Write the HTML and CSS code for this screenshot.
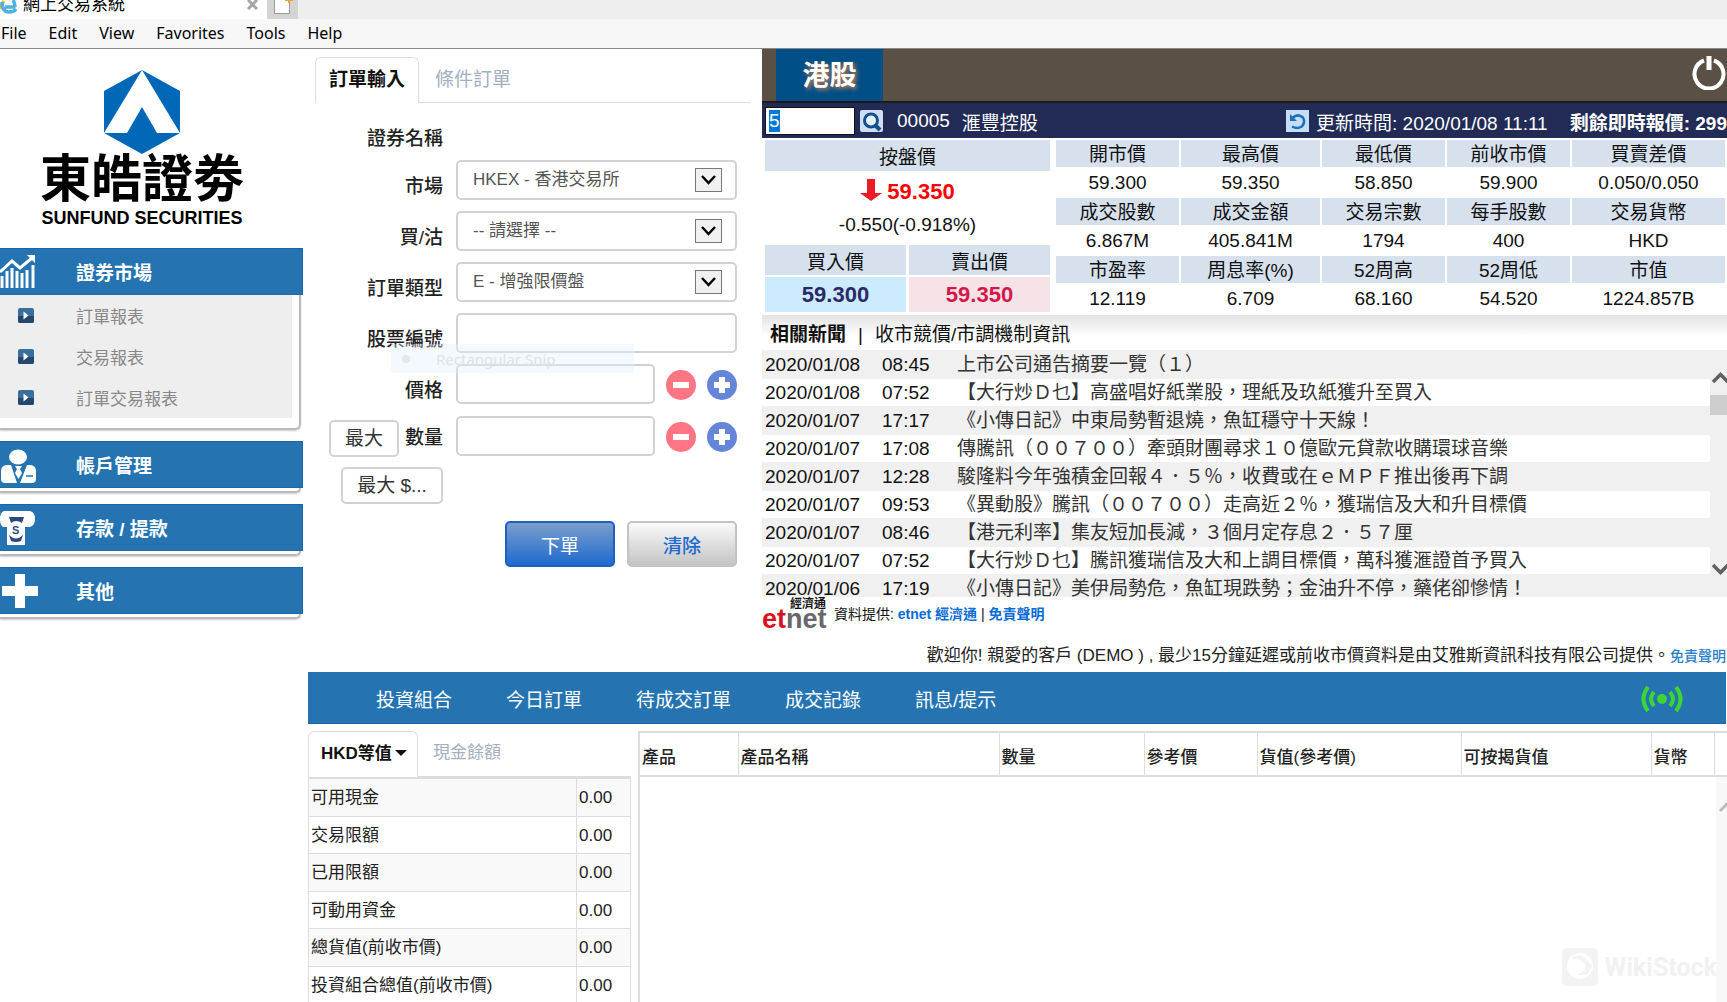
FILE: index.html
```html
<!DOCTYPE html>
<html lang="zh-Hant">
<head>
    <meta charset="utf-8">
    <title>網上交易系統</title>
    <link rel="stylesheet" href="styles.css">
</head>
<body>
    <header class="browser">
        <div class="tab-strip">
            <div class="browser-tab">
                <svg class="ie-icon" width="18" height="20" viewBox="0 0 18 20">
                    <path d="M0 9 Q1 4 4 1" fill="none" stroke="#f5b625" stroke-width="3"/>
                    <path d="M15.500 7 H5 M2 2 Q2 12 9 12 Q14 12 16 9 M13 0 Q15 3 15 7" fill="none" stroke="#4fb0e3" stroke-width="3.500"/>
                </svg>
                <span class="browser-title">網上交易系統</span>
                <button class="tab-close" aria-label="Close tab">
                    <svg width="11" height="10" viewBox="0 0 11 10"><path d="M1 0 L10 9 M10 0 L1 9" stroke="#a5a5a5" stroke-width="3"/></svg>
                </button>
            </div>
            <button class="new-tab" aria-label="New tab">
                <svg width="31" height="19" viewBox="0 0 31 19">
                    <path d="M7.500 0 V13.500 H22.500 V0" fill="#fdfdfd" stroke="#9a9a9a"/>
                    <path d="M22 0 V3 M18 0 H26" stroke="#f0a030" stroke-width="2"/>
                </svg>
            </button>
        </div>
        <nav class="menu-bar">
            <a href="#">File</a><a href="#">Edit</a><a href="#">View</a><a href="#">Favorites</a><a href="#">Tools</a><a href="#">Help</a>
        </nav>
    </header>

    <div class="app">
        <aside class="sidebar">
            <div class="logo">
                <svg width="78" height="84" viewBox="0 0 78 84">
                    <path d="M39 0 L77 21 V63 L39 84 L1 63 V21 Z" fill="#0068b7"/>
                    <path d="M39 0 L77 63 H54 L39 37 L24 63 H1 Z" fill="#fff"/>
                </svg>
                <div class="logo-name">東皓證劵</div>
                <div class="logo-sub">SUNFUND SECURITIES</div>
            </div>
            <div class="menu-group">
                <a href="#" class="menu-head">
                    <svg width="38" height="36" viewBox="0 0 38 36">
                        <path d="M2 34 V22 M7 34 V17 M12 34 V14 M17 34 V17 M22 34 V19 M27 34 V16 M33 34 V11" stroke="#fff" stroke-width="3"/>
                        <path d="M0 18 L12 7 L20 14 L32 4" fill="none" stroke="#fff" stroke-width="3"/>
                        <path d="M27 1 H35 V9 Z" fill="#fff"/>
                    </svg>
                    <span>證券市場</span>
                </a>
                <div class="menu-body open">
                    <ul>
                        <li><svg width="16" height="15" viewBox="0 0 16 15"><rect width="16" height="15" rx="2" fill="#3a6f9c"/><path d="M0 8 H16 V13 Q16 15 14 15 H2 Q0 15 0 13 Z" fill="#23486f"/><path d="M5.500 3.500 L10.500 7.500 L5.500 11.500 Z" fill="#fff"/></svg><a href="#">訂單報表</a></li>
                        <li><svg width="16" height="15" viewBox="0 0 16 15"><rect width="16" height="15" rx="2" fill="#3a6f9c"/><path d="M0 8 H16 V13 Q16 15 14 15 H2 Q0 15 0 13 Z" fill="#23486f"/><path d="M5.500 3.500 L10.500 7.500 L5.500 11.500 Z" fill="#fff"/></svg><a href="#">交易報表</a></li>
                        <li><svg width="16" height="15" viewBox="0 0 16 15"><rect width="16" height="15" rx="2" fill="#3a6f9c"/><path d="M0 8 H16 V13 Q16 15 14 15 H2 Q0 15 0 13 Z" fill="#23486f"/><path d="M5.500 3.500 L10.500 7.500 L5.500 11.500 Z" fill="#fff"/></svg><a href="#">訂單交易報表</a></li>
                    </ul>
                </div>
            </div>
            <div class="menu-group">
                <a href="#" class="menu-head">
                    <svg width="38" height="36" viewBox="0 0 38 36">
                        <ellipse cx="18" cy="10" rx="9" ry="7.500" fill="#fff"/>
                        <path d="M1 24 Q1 19 6 18 H11 L17 36 H5 Q1 36 1 32 Z M36 24 Q36 19 31 18 H27 L20 36 H32 Q36 36 36 32 Z" fill="#fff"/>
                        <path d="M15 19 H22 L20 22 L22 26 L18.500 32 L15 26 L17 22 Z" fill="#fff"/>
                        <path d="M26 29 H33" stroke="#2574b1" stroke-width="1.500"/>
                    </svg>
                    <span>帳戶管理</span>
                </a>
                <div class="menu-body"></div>
            </div>
            <div class="menu-group">
                <a href="#" class="menu-head">
                    <svg width="38" height="36" viewBox="0 0 38 36">
                        <path d="M4 1 H30 Q35 2 35 9 Q35 16 29 17 H25 V35 H7 V17 H3 Q0 15 0 9 Q0 2 4 1 Z" fill="#fff"/>
                        <path d="M9 7 H24 L22 13 Q16 9 11 13 Z M9 25 Q16 32 23 25 L21 31 Q16 33 11 31 Z" fill="#2b4a80"/>
                        <text x="12" y="24" class="coin">S</text>
                    </svg>
                    <span>存款 / 提款</span>
                </a>
                <div class="menu-body"></div>
            </div>
            <div class="menu-group">
                <a href="#" class="menu-head">
                    <svg width="38" height="36" viewBox="0 0 38 36"><path d="M15 1 H25 V13 H38 V23 H25 V35 H15 V23 H2 V13 H15 Z" fill="#fff"/></svg>
                    <span>其他</span>
                </a>
                <div class="menu-body"></div>
            </div>
        </aside>

        <main class="main">
            <div class="top-row">
                <section class="order">
                    <div class="tabs order-tabs">
                        <a href="#" class="tab active">訂單輸入</a>
                        <a href="#" class="tab">條件訂單</a>
                    </div>
                    <form class="order-form">
                        <div class="row name-row"><label>證券名稱</label></div>
                        <div class="row">
                            <label for="market">市場</label>
                            <span class="select-box">
                                <select id="market"><option>HKEX - 香港交易所</option></select>
                                <svg class="arrow" width="27" height="24" viewBox="0 0 27 24"><rect x=".5" y=".5" width="26" height="23" fill="#f0f0f0" stroke="#777"/><path d="M7 8 L13.500 15 L20 8" fill="none" stroke="#000" stroke-width="2.500"/></svg>
                            </span>
                        </div>
                        <div class="row">
                            <label for="side">買/沽</label>
                            <span class="select-box">
                                <select id="side"><option>-- 請選擇 --</option></select>
                                <svg class="arrow" width="27" height="24" viewBox="0 0 27 24"><rect x=".5" y=".5" width="26" height="23" fill="#f0f0f0" stroke="#777"/><path d="M7 8 L13.500 15 L20 8" fill="none" stroke="#000" stroke-width="2.500"/></svg>
                            </span>
                        </div>
                        <div class="row">
                            <label for="type">訂單類型</label>
                            <span class="select-box">
                                <select id="type"><option>E - 增強限價盤</option></select>
                                <svg class="arrow" width="27" height="24" viewBox="0 0 27 24"><rect x=".5" y=".5" width="26" height="23" fill="#f0f0f0" stroke="#777"/><path d="M7 8 L13.500 15 L20 8" fill="none" stroke="#000" stroke-width="2.500"/></svg>
                            </span>
                        </div>
                        <div class="row">
                            <label for="code">股票編號</label>
                            <input type="text" id="code">
                        </div>
                        <div class="row">
                            <label for="price">價格</label>
                            <input type="text" id="price">
                            <button type="button" class="step minus" aria-label="減少價格"></button>
                            <button type="button" class="step plus" aria-label="增加價格"></button>
                        </div>
                        <div class="row qty-row">
                            <button type="button" class="max">最大</button>
                            <label for="qty">數量</label>
                            <input type="text" id="qty">
                            <button type="button" class="step minus" aria-label="減少數量"></button>
                            <button type="button" class="step plus" aria-label="增加數量"></button>
                        </div>
                        <div class="max-row"><button type="button" class="max max-cash">最大 $...</button></div>
                        <div class="actions">
                            <button type="button" class="btn submit">下單</button>
                            <button type="button" class="btn clear">清除</button>
                        </div>
                        <div class="snip"><i></i><span>Rectangular Snip</span></div>
                    </form>
                </section>

                <section class="quote">
                    <div class="quote-top">
                        <a href="#" class="hk-tab">港股</a>
                        <button class="power" aria-label="登出">
                            <svg width="34" height="34" viewBox="0 0 34 34"><path d="M12 4.500 A14.500 14.500 0 1 0 22 4.500" fill="none" stroke="#fff" stroke-width="4"/><path d="M17 0 V14" stroke="#fff" stroke-width="5"/></svg>
                        </button>
                    </div>
                    <div class="search-bar">
                        <input type="text" id="quote-code" value="5" aria-label="股票編號">
                        <button class="icon-btn" aria-label="搜尋">
                            <svg width="23" height="22" viewBox="0 0 23 22"><rect width="23" height="22" rx="2" fill="#cfdff0"/><circle cx="11" cy="10.500" r="6.500" fill="#e8f0f8" stroke="#14508f" stroke-width="3"/><path d="M15 15 L20 20" stroke="#14508f" stroke-width="4"/></svg>
                        </button>
                        <span class="stock-code">00005</span>
                        <span>滙豐控股</span>
                        <button class="icon-btn refresh" aria-label="更新">
                            <svg width="23" height="22" viewBox="0 0 23 22"><rect width="23" height="22" fill="#c5def5"/><path d="M6.500 8 Q12 3 17 7.500 Q20 13 15 17 Q11 19 6 16.500" fill="none" stroke="#1f6fb8" stroke-width="2.500"/><path d="M4 4 V11 H11 Z" fill="#1f6fb8"/></svg>
                        </button>
                        <span>更新時間: 2020/01/08 11:11</span>
                        <b class="remain">剩餘即時報價: 299</b>
                    </div>
                    <div class="quote-data">
                        <table class="price-table">
                            <tr class="r-head"><th colspan="2">按盤價</th></tr>
                            <tr class="r-last"><td colspan="2">
                                <div class="last"><svg width="22" height="22" viewBox="0 0 22 22"><path d="M7 0 H15 V14 H22 L11 22 L0 14 H7 Z" fill="#ec1c24"/></svg>59.350</div>
                                <div class="change">-0.550(-0.918%)</div>
                            </td></tr>
                            <tr class="r-sub"><th>買入價</th><th>賣出價</th></tr>
                            <tr class="r-val"><td class="bid">59.300</td><td class="ask">59.350</td></tr>
                        </table>
                        <table class="stats">
                            <colgroup><col class="c1"><col class="c2"><col class="c1"><col class="c1"><col></colgroup>
                            <tr><th>開市價</th><th>最高價</th><th>最低價</th><th>前收市價</th><th>買賣差價</th></tr>
                            <tr><td>59.300</td><td>59.350</td><td>58.850</td><td>59.900</td><td>0.050/0.050</td></tr>
                            <tr><th>成交股數</th><th>成交金額</th><th>交易宗數</th><th>每手股數</th><th>交易貨幣</th></tr>
                            <tr><td>6.867M</td><td>405.841M</td><td>1794</td><td>400</td><td>HKD</td></tr>
                            <tr><th>市盈率</th><th>周息率(%)</th><th>52周高</th><th>52周低</th><th>市值</th></tr>
                            <tr><td>12.119</td><td>6.709</td><td>68.160</td><td>54.520</td><td>1224.857B</td></tr>
                        </table>
                    </div>
                    <div class="news-head"><b>相關新聞</b><span>|</span><a href="#">收市競價/市調機制資訊</a></div>
                    <div class="news">
                        <table>
                            <tr><td class="date">2020/01/08</td><td class="time">08:45</td><td>上市公司通告摘要一覽（１）</td></tr>
                            <tr><td class="date">2020/01/08</td><td class="time">07:52</td><td>【大行炒Ｄ乜】高盛唱好紙業股，理紙及玖紙獲升至買入</td></tr>
                            <tr><td class="date">2020/01/07</td><td class="time">17:17</td><td>《小傳日記》中東局勢暫退燒，魚缸穩守十天線！</td></tr>
                            <tr><td class="date">2020/01/07</td><td class="time">17:08</td><td>傳騰訊（００７００）牽頭財團尋求１０億歐元貸款收購環球音樂</td></tr>
                            <tr><td class="date">2020/01/07</td><td class="time">12:28</td><td>駿隆料今年強積金回報４．５％，收費或在ｅＭＰＦ推出後再下調</td></tr>
                            <tr><td class="date">2020/01/07</td><td class="time">09:53</td><td>《異動股》騰訊（００７００）走高近２％，獲瑞信及大和升目標價</td></tr>
                            <tr><td class="date">2020/01/07</td><td class="time">08:46</td><td>【港元利率】集友短加長減，３個月定存息２．５７厘</td></tr>
                            <tr><td class="date">2020/01/07</td><td class="time">07:52</td><td>【大行炒Ｄ乜】騰訊獲瑞信及大和上調目標價，萬科獲滙證首予買入</td></tr>
                            <tr><td class="date">2020/01/06</td><td class="time">17:19</td><td>《小傳日記》美伊局勢危，魚缸現跌勢；金油升不停，藥佬卻慘情！</td></tr>
                        </table>
                        <div class="scrollbar">
                            <svg width="17" height="12" viewBox="0 0 17 12"><path d="M3 10 L10.500 2.500 L18 10" fill="none" stroke="#606060" stroke-width="3.500"/></svg>
                            <div class="thumb"></div>
                            <svg class="down" width="17" height="12" viewBox="0 0 17 12"><path d="M3 2 L10.500 9.500 L18 2" fill="none" stroke="#606060" stroke-width="3.500"/></svg>
                        </div>
                    </div>
                    <div class="provider">
                        <div class="etnet"><small>經濟通</small><b>et<span>net</span></b></div>
                        <p>資料提供: <a href="#">etnet 經濟通</a> | <a href="#">免責聲明</a></p>
                    </div>
                </section>
            </div>

            <p class="welcome">歡迎你! 親愛的客戶 (DEMO ) , 最少15分鐘延遲或前收市價資料是由艾雅斯資訊科技有限公司提供。<a href="#">免責聲明</a></p>

            <nav class="bottom-nav">
                <a href="#">投資組合</a>
                <a href="#">今日訂單</a>
                <a href="#">待成交訂單</a>
                <a href="#">成交記錄</a>
                <a href="#">訊息/提示</a>
                <svg width="42" height="28" viewBox="0 0 42 28" fill="none" stroke="#3bd632">
                    <circle cx="21" cy="14" r="5" fill="#3bd632" stroke="none"/>
                    <path d="M13 7 Q7 14 13 21 M29 7 Q35 14 29 21" stroke-width="4"/>
                    <path d="M7 2 Q-2 14 7 26 M35 2 Q44 14 35 26" stroke-width="4"/>
                </svg>
            </nav>

            <div class="bottom-row">
                <section class="cash">
                    <div class="tabs cash-tabs">
                        <a href="#" class="tab active">HKD等值<i class="caret"></i></a>
                        <a href="#" class="tab">現金餘額</a>
                    </div>
                    <table>
                        <tr><td>可用現金</td><td class="amount">0.00</td></tr>
                        <tr><td>交易限額</td><td class="amount">0.00</td></tr>
                        <tr><td>已用限額</td><td class="amount">0.00</td></tr>
                        <tr><td>可動用資金</td><td class="amount">0.00</td></tr>
                        <tr><td>總貨值(前收市價)</td><td class="amount">0.00</td></tr>
                        <tr><td>投資組合總值(前收市價)</td><td class="amount">0.00</td></tr>
                    </table>
                </section>
                <section class="portfolio">
                    <table>
                        <colgroup><col class="p1"><col><col class="p3"><col class="p4"><col class="p5"><col class="p6"><col class="p7"><col class="p8"></colgroup>
                        <tr><th>產品</th><th>產品名稱</th><th>數量</th><th>參考價</th><th>貨值(參考價)</th><th>可按揭貨值</th><th>貨幣</th><th></th></tr>
                    </table>
                    <div class="scroll-track">
                        <svg width="11" height="14" viewBox="0 0 11 14"><path d="M4 12 L12 4" stroke="#bbb" stroke-width="3"/></svg>
                    </div>
                </section>
            </div>
        </main>
    </div>

    <div class="watermark">
        <svg width="36" height="38" viewBox="0 0 36 38">
            <rect width="36" height="38" rx="5" fill="#f3f3f3"/>
            <circle cx="18" cy="18" r="13" fill="#fff"/>
            <path d="M9 10 Q18 4 25 12 L30 18 L25 27 H15 L23 22 L24 17 L19 12 Z" fill="#f3f3f3"/>
        </svg>
        <span>WikiStock</span>
    </div>

    <script>
        // the stock code is ready to be typed over
        document.getElementById("quote-code").select();
    </script>
</body>
</html>
```
FILE: styles.css
```css
* {
    box-sizing: border-box;
}
body {
    margin: 0;
    min-height: 100vh;
    display: flex;
    flex-direction: column;
    font-family: "Liberation Sans", "Noto Sans CJK TC", sans-serif;
    font-size: 19px;
    color: #222;
    background-color: #fff;
    overflow-x: hidden;
}
a {
    color: inherit;
    text-decoration: none;
}
button, input, select {
    font-family: inherit;
    margin: 0;
}
button {
    cursor: pointer;
    padding: 0;
}
svg {
    display: block;
    flex: none;
}
table {
    border-collapse: collapse;
}
th {
    font-weight: normal;
}

/* browser */
.tab-strip {
    display: flex;
    height: 19px;
    overflow: hidden;
    background-color: #eee;
}
.browser-tab {
    display: flex;
    width: 267px;
    background-color: #fff;
}
.browser-title {
    margin-left: 5px;
    font-size: 17px;
    line-height: 24px;
    margin-top: -7px;
    color: #000;
    flex: 1;
}
.tab-close {
    border: none;
    background: none;
    height: 10px;
    margin-right: 9px;
}
.new-tab {
    border: none;
    background-color: #d4d4d4;
}
.menu-bar {
    display: flex;
    gap: 22px;
    height: 30px;
    padding-left: 1px;
    background-color: #f7f7f7;
    border-bottom: 1px solid #888;
    font-family: "Noto Sans", sans-serif;
    font-size: 16px;
    line-height: 29px;
    color: #000;
}

.app {
    display: flex;
    flex: 1;
}

/* sidebar */
.sidebar {
    width: 303px;
    flex: none;
}
.logo {
    display: flex;
    flex-direction: column;
    align-items: center;
    width: 284px;
    height: 199px;
    padding-top: 21px;
    color: #000;
}
.logo-name {
    font-size: 51px;
    font-weight: bold;
    line-height: 52px;
}
.logo-sub {
    font-size: 18px;
    font-weight: bold;
    line-height: 24px;
    white-space: nowrap;
}
.menu-group {
    margin-bottom: 11px;
}
.menu-head {
    display: flex;
    align-items: center;
    height: 47px;
    border: 1px solid #1767a8;
    border-left: none;
    background-color: #2574b1;
    color: #fff;
    font-weight: bold;
}
.menu-head svg {
    margin-right: 38px;
}
.coin {
    font-size: 11px;
    font-weight: bold;
    fill: #2b4a80;
}
.menu-body {
    height: 5px;
    width: 301px;
    border-right: 2px solid #bbb;
    border-bottom: 2px solid #bbb;
    border-radius: 0 0 6px 0;
    box-shadow: 0 1px 2px #ccc;
}
.menu-body.open {
    height: 135px;
    padding-right: 7px;
}
.menu-body ul {
    list-style: none;
    margin: 0;
    padding: 0;
    background-color: #eee;
}
.menu-body li {
    display: flex;
    align-items: center;
    height: 41px;
    padding-left: 18px;
    gap: 42px;
    font-size: 17px;
    color: #888;
}

.main {
    flex: 1;
    min-width: 0;
    display: flex;
    flex-direction: column;
}
.top-row {
    display: flex;
}

/* tabs */
.tabs {
    display: flex;
    border-bottom: 1px solid #ddd;
}
.tab {
    color: #a3aec2;
}
.tab.active {
    border: 1px solid #ddd;
    border-bottom: none;
    border-radius: 6px 6px 0 0;
    margin-bottom: -1px;
    background-color: #fff;
    font-weight: bold;
    color: #111;
}

/* order form */
.order {
    width: 459px;
    flex: none;
    padding: 8px 11px 0 12px;
}
.order-tabs {
    height: 46px;
    line-height: 45px;
}
.order-tabs .tab {
    padding: 0 16px;
}
.order-tabs .active {
    padding: 0 13px;
    line-height: 43px;
}
.order-form {
    position: relative;
    padding-right: 14px;
}
.row {
    display: flex;
    height: 40px;
    margin-bottom: 11px;
}
.row label {
    width: 128px;
    margin-right: 13px;
    padding-top: 11px;
    line-height: 32px;
    text-align: right;
    font-weight: 500;
    flex: none;
}
.row input, .row select {
    flex: 1;
    min-width: 0;
    width: 100%;
    height: 40px;
    border: 2px solid #d2d2d2;
    border-radius: 5px;
    background-color: #fff;
    color: #555;
    font-size: 17px;
}
.row select {
    appearance: none;
    padding: 0 0 2px 15px;
}
.select-box {
    position: relative;
    flex: 1;
}
.arrow {
    position: absolute;
    right: 15px;
    top: 8px;
    pointer-events: none;
}
.name-row {
    height: 46px;
}
.name-row label {
    padding-top: 20px;
}
.step {
    position: relative;
    width: 30px;
    height: 30px;
    margin: 6px 0 0 11px;
    border: none;
    border-radius: 50%;
    flex: none;
}
.minus {
    background-color: #ff7583;
}
.plus {
    background-color: #6585d9;
}
.step::before, .plus::after {
    content: "";
    position: absolute;
    left: 7px;
    top: 12px;
    width: 16px;
    height: 6px;
    background-color: #fff;
}
.plus::after {
    left: 12px;
    top: 7px;
    width: 6px;
    height: 16px;
}
.qty-row {
    margin-top: 12px;
    padding-left: 14px;
}
.qty-row label {
    width: 44px;
    padding-top: 6px;
}
.max {
    width: 70px;
    height: 37px;
    border: 2px solid #d2d2d2;
    border-radius: 5px;
    background-color: #fff;
    color: #333;
    font-size: 19px;
    line-height: 32px;
}
.qty-row .max {
    margin-top: 4px;
}
.max-row {
    padding-left: 26px;
}
.max-cash {
    width: 102px;
}
.actions {
    display: flex;
    justify-content: flex-end;
    gap: 12px;
    margin-top: 17px;
}
.btn {
    width: 110px;
    height: 46px;
    border: 2px solid #c3c3c3;
    border-radius: 5px;
    font-size: 19px;
}
.submit {
    border-color: #1b62c4;
    background-image: linear-gradient(#7b9fcc, #2069cf);
    color: #fff;
}
.clear {
    background-image: linear-gradient(#fafafa, #c4c4c4);
    color: #2069cf;
    font-weight: 500;
}
/* fading snipping tool entry left over the form */
.snip {
    position: absolute;
    left: 76px;
    top: 241px;
    display: flex;
    align-items: center;
    gap: 26px;
    width: 243px;
    height: 29px;
    padding-left: 11px;
    background-color: rgba(225, 241, 252, 0.4);
    font-family: "Noto Sans", sans-serif;
    font-size: 15px;
    color: #e2e2e2;
    pointer-events: none;
}
.snip i {
    width: 8px;
    height: 8px;
    border-radius: 50%;
    background-color: #e6e6ea;
}

/* quote panel */
.quote {
    flex: 1;
    min-width: 0;
    color: #111;
}
.quote-top {
    display: flex;
    justify-content: space-between;
    height: 54px;
    padding-left: 14px;
    background-color: #5b5045;
    border-bottom: 2px solid #1d1a1c;
}
.hk-tab {
    width: 107px;
    background-color: #004f87;
    color: #fff;
    font-size: 27px;
    font-weight: bold;
    line-height: 54px;
    text-align: center;
    text-shadow: 2px 2px 4px #d08050;
}
.power {
    border: none;
    background: none;
    margin: 7px 1px 0 0;
    align-self: flex-start;
}
.search-bar {
    display: flex;
    align-items: center;
    height: 35px;
    padding: 1px 0 0 3px;
    background-color: #212b56;
    color: #fff;
    white-space: nowrap;
}
.search-bar input {
    width: 90px;
    height: 28px;
    padding: 0 3px;
    border: 1px solid #111;
    font-size: 19px;
    outline: none;
}
.search-bar input::selection {
    background-color: #0078d7;
    color: #fff;
}
.icon-btn {
    border: none;
    background: none;
    margin-left: 5px;
}
.stock-code {
    margin: 0 12px 0 14px;
}
.refresh {
    margin: 0 7px 0 auto;
}
.remain {
    margin-left: 22px;
}
.quote-data {
    display: flex;
    gap: 1px;
    height: 177px;
}
.quote-data table {
    border-collapse: separate;
    table-layout: fixed;
    text-align: center;
}
.quote-data th, .quote-data td {
    padding: 0;
}
.quote-data th {
    background-color: #d6e1ed;
}
.price-table {
    width: 291px;
    height: 176px;
    border-spacing: 3px 2px;
}
.price-table .r-head {
    height: 31px;
}
.price-table .r-last {
    height: 70px;
}
.price-table .r-sub {
    height: 30px;
}
.price-table .r-val {
    height: 35px;
    font-size: 22px;
    font-weight: bold;
}
.last {
    display: flex;
    justify-content: center;
    gap: 5px;
    font-size: 22px;
    font-weight: bold;
    line-height: 26px;
    color: #f00;
    margin-bottom: 8px;
}
.change {
    line-height: 24px;
}
.bid {
    background-color: #ccebff;
    color: #2b2a66;
}
.ask {
    background-color: #f5e3e8;
    color: #d4184a;
}
.stats {
    flex: 1;
    border-spacing: 2px;
    height: 176px;
}
.stats tr {
    height: 27px;
    line-height: 27px;
}
.stats th {
    padding-top: 2px;
    line-height: 25px;
}
.stats .c1 {
    width: 123px;
}
.stats .c2 {
    width: 139px;
}
.news-head {
    display: flex;
    gap: 12px;
    height: 35px;
    padding-left: 8px;
    line-height: 39px;
    background-image: linear-gradient(#e2e2e2, #fff 60%);
}
.news {
    display: flex;
    height: 247px;
    overflow: hidden;
}
.news table {
    flex: 1;
    align-self: flex-start;
}
.news tr {
    height: 27px;
    line-height: 27px;
}
.news tr:nth-child(odd) {
    height: 29px;
    background-color: #f0f0f0;
}
.news td {
    padding: 0;
    white-space: nowrap;
    color: #333;
}
.news .date {
    width: 120px;
    padding-left: 3px;
    color: #111;
}
.news .time {
    width: 75px;
    color: #111;
}
.scrollbar {
    display: flex;
    flex-direction: column;
    width: 17px;
    padding: 22px 0;
    background-color: #f0f0f0;
}
.thumb {
    height: 20px;
    margin-top: 11px;
    background-color: #cdcdcd;
}
.down {
    margin-top: auto;
}
.provider {
    display: flex;
    gap: 8px;
    height: 34px;
    font-size: 14px;
}
.provider p {
    margin: 0;
    line-height: 34px;
}
.provider p a {
    color: #0a6cd6;
    font-weight: bold;
}
.etnet {
    width: 64px;
    text-align: right;
}
.etnet small {
    display: block;
    font-size: 12px;
    font-weight: bold;
    line-height: 14px;
}
.etnet b {
    display: block;
    font-size: 27px;
    line-height: 17px;
    color: #d8121f;
}
.etnet span {
    color: #66686b;
}

.welcome {
    margin: 0;
    height: 41px;
    padding: 9px 1px 0 0;
    line-height: 32px;
    font-size: 17px;
    text-align: right;
    white-space: nowrap;
}
.welcome a {
    font-size: 14px;
    color: #2a80c8;
    font-weight: 500;
}

/* lower part */
.bottom-nav {
    display: flex;
    align-items: center;
    gap: 54px;
    height: 52px;
    margin: 0 1px 0 5px;
    padding: 2px 43px 0 68px;
    background-color: #2574b1;
    border-bottom: 1px solid #1767a8;
    color: #fff;
}
.bottom-nav svg {
    margin-left: auto;
}
.bottom-row {
    display: flex;
    gap: 7px;
    flex: 1;
    padding: 7px 0 0 5px;
    font-size: 17px;
}
.cash {
    width: 323px;
    flex: none;
}
.cash-tabs {
    height: 47px;
    line-height: 43px;
    border-bottom: 2px solid #ddd;
}
.cash-tabs .tab {
    padding: 0 15px;
}
.cash-tabs .active {
    display: flex;
    align-items: center;
    width: 110px;
    height: 46px;
    padding: 0 0 3px 12px;
}
.caret {
    margin-left: 3px;
    border: 6px solid transparent;
    border-top-color: #111;
    border-bottom: none;
}
.cash table {
    width: 100%;
}
.cash tr {
    height: 37px;
    line-height: 34px;
}
.cash tr:nth-child(odd) {
    height: 38px;
    background-color: #f9f9f9;
}
.cash td {
    padding: 1px 2px 0;
    border: 1px solid #ddd;
}
.cash tr:last-child td {
    border-bottom: none;
}
.cash .amount {
    width: 54px;
}
.portfolio {
    flex: 1;
    min-width: 0;
    display: flex;
    flex-direction: column;
    border-left: 2px solid #ddd;
}
.portfolio table {
    width: 100%;
    table-layout: fixed;
}
.portfolio th {
    height: 44px;
    padding: 8px 2px 0;
    border: 1px solid #ddd;
    border-width: 2px 1px 2px 0;
    text-align: left;
    font-weight: 500;
    line-height: 24px;
}
.portfolio th:last-child {
    border-right: none;
}
.p1 { width: 98px; }
.p3 { width: 145px; }
.p4 { width: 113px; }
.p5 { width: 204px; }
.p6 { width: 190px; }
.p7 { width: 63px; }
.p8 { width: 13px; }
.scroll-track {
    flex: 1;
    width: 11px;
    margin-left: auto;
    padding-top: 22px;
    background-color: #f8f8f8;
}

.watermark {
    position: absolute;
    right: 10px;
    bottom: 16px;
    display: flex;
    align-items: center;
    gap: 7px;
    font-family: Roboto, sans-serif;
    font-size: 25px;
    font-weight: bold;
    color: #f1f1f1;
}
```
